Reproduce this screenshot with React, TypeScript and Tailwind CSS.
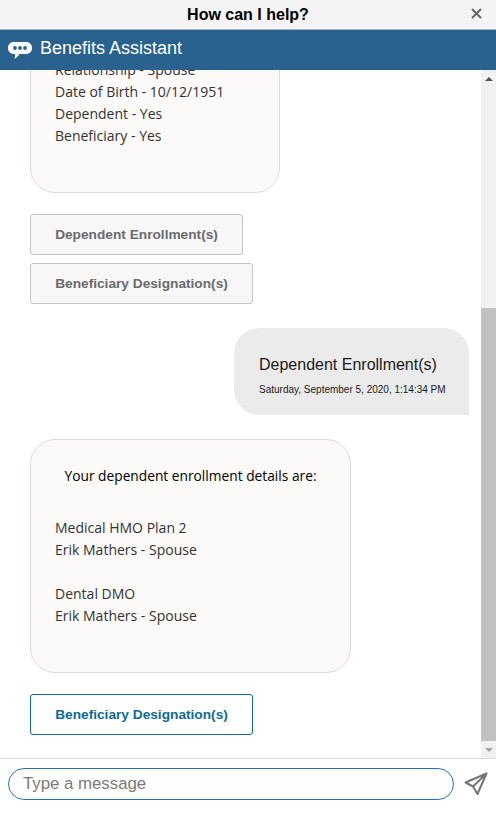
const bodyFont = "font-['Open_Sans','Noto_Sans',sans-serif]";
const uiFont = "font-['Liberation_Sans',Arial,sans-serif]";

function OptionButton({ label, width, active }: { label: string; width: string; active?: boolean }) {
  return (
    <div
      className={`${width} h-[41px] flex items-center justify-center rounded-[3px] border pt-[1px] text-[13.7px] font-bold ${
        active
          ? "bg-white border-[#0f6a94] text-[#0f6a94]"
          : "bg-[#f7f7f7] border-[#c4c4c4] text-[#6b6b6b]"
      }`}
    >
      {label}
    </div>
  );
}

function BotCard({ width, height, className, children }: { width: string; height: string; className?: string; children: React.ReactNode }) {
  return (
    <div
      className={`${width} ${height} ${className ?? ""} ${bodyFont} rounded-[25px] border border-[#dedbd6] bg-[#fbfaf8] pl-[24px] pr-[24px] text-[14px] leading-[22px] text-[#333333]`}
    >
      {children}
    </div>
  );
}

export default function App() {
  return (
    <div className={`${uiFont} w-[496px] h-[818px] bg-white flex flex-col overflow-hidden`}>
      {/* Title */}
      <div className="relative h-[30px] bg-[#f4f4f4] flex items-center justify-center border-b border-[#a9b4bd] shrink-0">
        <span className="text-[16px] font-bold text-black">How can I help?</span>
        <svg className="absolute right-[14px] top-[8px]" width="11" height="11" viewBox="0 0 11 11">
          <path d="M1 1l9 9M10 1l-9 9" stroke="#666666" strokeWidth="2" fill="none" />
        </svg>
      </div>

      {/* Header */}
      <div className="h-[40px] bg-[#29618f] flex items-center pl-[8px] gap-[8px] shrink-0">
        <svg className="mt-[1px]" width="24" height="17" viewBox="0 0 24 17">
          <path
            d="M6 0h12c3.6 0 6 2.4 6 6s-2.4 6-6 6h-6.6C10.2 14 8.6 15.8 6.4 17c.5-1.5.8-3.2.8-5H6c-3.6 0-6-2.4-6-6s2.4-6 6-6z"
            fill="#ffffff"
          />
          <circle cx="7" cy="6" r="1.9" fill="#29618f" />
          <circle cx="12" cy="6" r="1.9" fill="#29618f" />
          <circle cx="17" cy="6" r="1.9" fill="#29618f" />
        </svg>
        <span className="-mt-[3px] text-[18px] text-white">Benefits Assistant</span>
      </div>

      {/* Messages */}
      <div className="h-[688px] flex shrink-0 overflow-hidden">
        <div className="flex-1 overflow-hidden">
          <div className="-mt-[100px] pl-[30px] pr-[12px]">
            <BotCard width="w-[250px]" height="h-[223px]" className="pt-[88px]">
              <div>Relationship - Spouse</div>
              <div>Date of Birth - 10/12/1951</div>
              <div>Dependent - Yes</div>
              <div>Beneficiary - Yes</div>
            </BotCard>

            <div className="mt-[21px] flex flex-col gap-[8px]">
              <OptionButton label="Dependent Enrollment(s)" width="w-[213px]" />
              <OptionButton label="Beneficiary Designation(s)" width="w-[223px]" />
            </div>

            <div className="mt-[24px] flex justify-end">
              <div className="w-[235px] h-[87px] rounded-l-[25px] rounded-tr-[25px] bg-[#ebebeb] pl-[25px] pt-[26px] text-[#1a1a1a]">
                <div className="text-[16px] leading-[22px]">Dependent Enrollment(s)</div>
                <div className="mt-[8px] text-[10px] leading-[12px]">Saturday, September 5, 2020, 1:14:34 PM</div>
              </div>
            </div>

            <BotCard width="w-[321px]" height="h-[234px]" className="mt-[24px] pt-[25px]">
              <div className="text-center text-[13.75px] text-black">Your dependent enrollment details are:</div>
              <div className="h-[30px]" />
              <div>Medical HMO Plan 2</div>
              <div>Erik Mathers - Spouse</div>
              <div className="h-[22px]" />
              <div>Dental DMO</div>
              <div>Erik Mathers - Spouse</div>
            </BotCard>

            <div className="mt-[21px]">
              <OptionButton label="Beneficiary Designation(s)" width="w-[223px]" active />
            </div>
          </div>
        </div>

        {/* Scrollbar */}
        <div className="w-[15px] bg-[#f1f1f1] flex flex-col items-center shrink-0">
          <div className="h-[17px] flex items-center justify-center">
            <div className="w-0 h-0 border-x-[4px] border-x-transparent border-b-[4px] border-b-[#505050]" />
          </div>
          <div className="h-[221px]" />
          <div className="w-[15px] flex-1 bg-[#c1c1c1]" />
          <div className="h-[17px] flex items-center justify-center">
            <div className="w-0 h-0 border-x-[4px] border-x-transparent border-t-[4px] border-t-[#a3a3a3]" />
          </div>
        </div>
      </div>

      {/* Input */}
      <div className="flex-1 border-t border-[#dcdcdc] flex items-start pl-[8px] pt-[9px]">
        <div className="w-[446px] h-[32px] rounded-[16px] border border-[#1f72c4] flex items-center pl-[14px] text-[16.8px] text-[#7a7a7a]">
          Type a message
        </div>
        <svg className="ml-[10px] mt-[4px]" width="24" height="24" viewBox="0 0 24 24" fill="none" stroke="#757575" strokeWidth="2" strokeLinejoin="round">
          <path d="M22.5 1.5 1.5 10.5l7.5 4 4.5 7.5zM22.5 1.5 9 14.5" />
        </svg>
      </div>
    </div>
  );
}
